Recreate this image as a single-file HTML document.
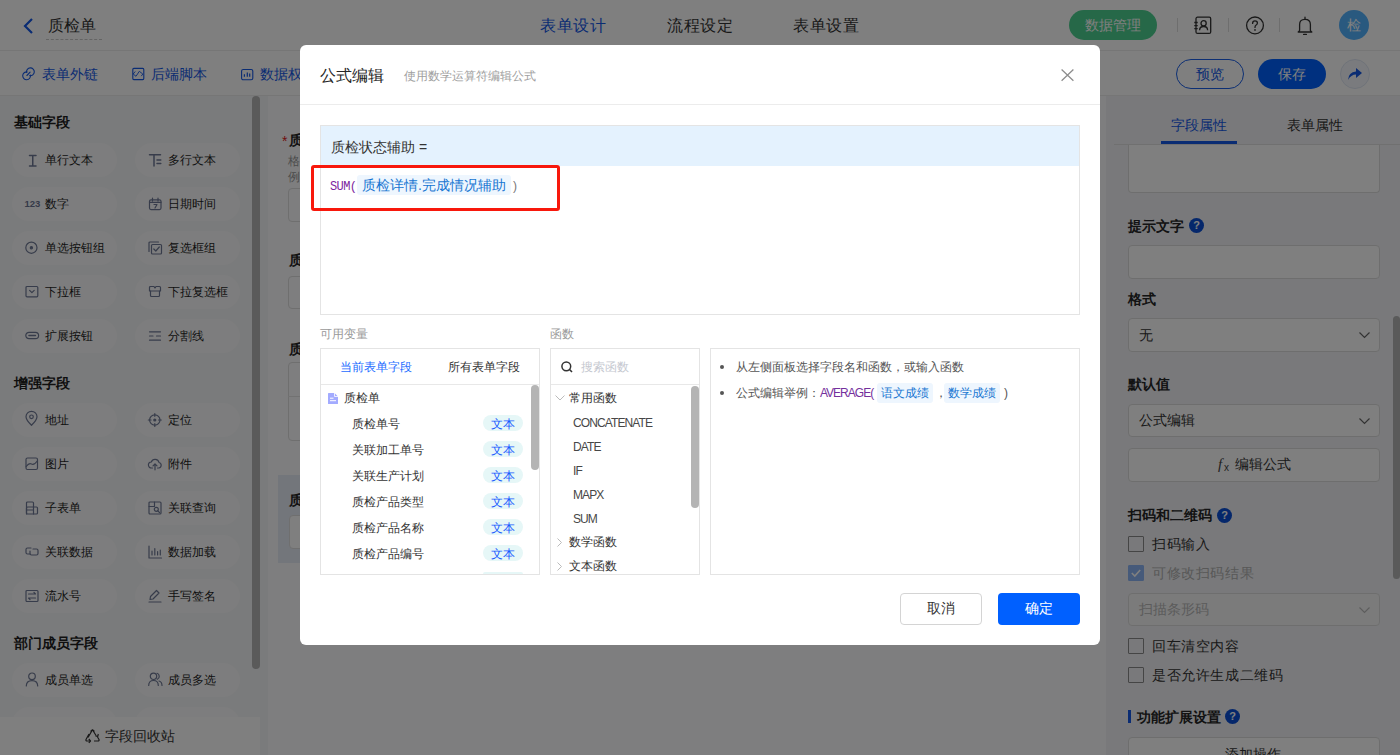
<!DOCTYPE html>
<html><head><meta charset="utf-8">
<style>
*{box-sizing:border-box;margin:0;padding:0}
html,body{width:1400px;height:755px;overflow:hidden;background:#fff;font-family:"Liberation Sans",sans-serif;color:#333}
.a{position:absolute}
.t{position:absolute;white-space:nowrap;line-height:1}
svg{position:absolute;overflow:visible}
/* left panel */
.pill{position:absolute;width:105px;height:34px;border-radius:17px;background:#fbfbfc}
.pill span{position:absolute;left:33px;top:11px;font-size:12px;line-height:12px;color:#1f1f1f;white-space:nowrap}

.sec{position:absolute;left:14px;font-size:14px;font-weight:bold;line-height:14px;color:#1f1f1f}
/* right panel */
.rl{position:absolute;left:1128px;font-size:14px;font-weight:bold;line-height:14px;color:#262626}
.rin{position:absolute;left:1128px;width:252px;border:1px solid #ddd;border-radius:4px;background:#fff}
.cb{position:absolute;left:1128px;width:16px;height:16px;border:1px solid #8a8a8a;border-radius:1px;background:transparent}
.cbt{position:absolute;left:1152px;font-size:14px;line-height:14px;color:#333;white-space:nowrap;letter-spacing:0.6px}
.q{position:absolute;width:15px;height:15px;border-radius:50%;background:#0a4fd6;color:#fff;font-size:11px;font-weight:bold;line-height:15px;text-align:center}
/* modal */
.mbox{position:absolute;border:1px solid #e4e4e4;background:#fff}
.vi{position:absolute;left:352px;font-size:12px;line-height:12px;color:#333;white-space:nowrap}
.tag{position:absolute;left:483px;width:40px;height:16px;margin-top:-1px;border-radius:8px;background:#e6f7f7;color:#1a5cff;font-size:12px;line-height:19px;text-align:center;overflow:hidden}
.fi{position:absolute;left:573px;margin-top:1px;font-size:12px;line-height:12px;color:#474747;white-space:nowrap;letter-spacing:-0.9px}
</style></head><body>

<!-- ===== HEADER ===== -->
<div class="a" style="left:0;top:0;width:1400px;height:51px;background:#fff;border-bottom:1px solid #ececec"></div>
<svg width="12" height="16" style="left:22px;top:18px"><path d="M10 1 L3 8 L10 15" fill="none" stroke="#1458e6" stroke-width="2.2"/></svg>
<div class="t" style="left:48px;top:18px;font-size:16px;color:#333">质检单</div>
<div class="a" style="left:46px;top:39px;width:56px;border-top:1px dashed #c8c8c8"></div>
<div class="t" style="left:540px;top:18px;font-size:16px;letter-spacing:0.5px;color:#1458e6">表单设计</div>
<div class="t" style="left:667px;top:18px;font-size:16px;letter-spacing:0.5px;color:#333">流程设定</div>
<div class="t" style="left:793px;top:18px;font-size:16px;letter-spacing:0.5px;color:#333">表单设置</div>
<div class="a" style="left:1069px;top:10px;width:88px;height:30px;border-radius:15px;background:#4cd090"></div>
<div class="t" style="left:1085px;top:18px;font-size:14px;color:#fff">数据管理</div>
<div class="a" style="left:1177px;top:18px;width:1px;height:14px;background:#ddd"></div>
<div class="a" style="left:1228px;top:18px;width:1px;height:14px;background:#ddd"></div>
<div class="a" style="left:1279px;top:18px;width:1px;height:14px;background:#ddd"></div>
<svg width="18" height="19" style="left:1194px;top:16px" fill="none" stroke="#333" stroke-width="1.3"><rect x="2" y="1.2" width="14.7" height="16.2" rx="1.5"/><path d="M0.3 6.5h3.4M0.3 9.7h3.4M0.3 12.7h3.4"/><circle cx="9.6" cy="7.2" r="2.6"/><path d="M5.6 14.2Q5.6 10.5 9.6 10.5Q13.6 10.5 13.6 14.2"/></svg>
<svg width="20" height="20" style="left:1245px;top:16px" fill="none" stroke="#333" stroke-width="1.3"><circle cx="10" cy="9.4" r="8.4"/><path d="M7.6 7.4Q7.6 4.9 10 4.9Q12.4 4.9 12.4 7.1Q12.4 8.5 10.9 9.3Q10 9.9 10 11.4" stroke-linecap="round"/><circle cx="10" cy="13.9" r="0.85" fill="#333" stroke="none"/></svg>
<svg width="16" height="19" style="left:1297px;top:16px" fill="none" stroke="#333" stroke-width="1.3" stroke-linejoin="round"><path d="M2.6 14.6V8.6Q2.6 3.3 8 3.3Q13.4 3.3 13.4 8.6V14.6L14.8 16H1.2Z"/><path d="M8 1.2v2M6.6 18.4h2.8" stroke-linecap="round"/></svg>
<div class="a" style="left:1339px;top:10px;width:30px;height:30px;border-radius:50%;background:#52b2ff"></div>
<div class="t" style="left:1347px;top:18px;font-size:14px;color:#fff">检</div>

<!-- ===== TOOLBAR ===== -->
<div class="a" style="left:0;top:51px;width:1400px;height:45px;background:#fff;border-bottom:1px solid #ececec"></div>
<svg width="14" height="14" style="left:22px;top:67px" fill="none" stroke="#1458e6" stroke-width="1.1" stroke-linecap="round"><path d="M4.56 5.48A3.9 3.9 0 1 1 7.72 8.64M8.44 8.12A3.9 3.9 0 1 1 5.28 4.96M4.9 8.5L8.1 5.1"/></svg>
<div class="t" style="left:42px;top:67px;font-size:14px;color:#1458e6">表单外链</div>
<svg width="13" height="14" style="left:132px;top:67px" fill="none" stroke="#1458e6" stroke-linejoin="round" stroke-linecap="round"><rect x="0.8" y="1.4" width="11" height="11.2" rx="1" stroke-width="1.1"/><path d="M3 4.8L1.2 7L4 9.3L7.3 4.3L10.8 7L9.5 8.8" stroke-width="0.9"/></svg>
<div class="t" style="left:151px;top:67px;font-size:14px;color:#1458e6">后端脚本</div>
<svg width="13" height="13" style="left:241px;top:68px" fill="none" stroke="#1458e6"><rect x="0.6" y="1.5" width="11.2" height="10.3" rx="1.6" stroke-width="1.1"/><path d="M3.4 6.2v2.6M6.3 4.6v4.2M8.7 5.6v3.2" stroke-width="1.2"/></svg>
<div class="t" style="left:260px;top:67px;font-size:14px;color:#1458e6">数据权限</div>
<div class="a" style="left:1176px;top:59px;width:68px;height:30px;border:1px solid #1a5fe8;border-radius:15px;background:#fff"></div>
<div class="t" style="left:1196px;top:67px;font-size:14px;color:#1458e6">预览</div>
<div class="a" style="left:1258px;top:59px;width:68px;height:30px;border-radius:15px;background:#0060ff"></div>
<div class="t" style="left:1278px;top:67px;font-size:14px;color:#fff">保存</div>
<div class="a" style="left:1340px;top:59px;width:30px;height:30px;border:1px solid #dfe6f3;border-radius:50%;background:#f4f7fc"></div>
<svg width="16" height="14" style="left:1347px;top:67px"><path d="M1 13 Q1.5 5 9 4.5 L9 1 L15 6 L9 11 L9 7.5 Q4 7.5 1 13 Z" fill="#1458e6"/></svg>

<!-- ===== LEFT PANEL ===== -->
<div class="a" style="left:0;top:96px;width:268px;height:659px;background:#f5f6f8"></div>
<div class="sec" style="top:115px">基础字段</div>
<div class="pill" style="left:12px;top:143px"><svg style="left:13px;top:10px" width="14" height="14" viewBox="0 0 14 14" fill="none" stroke="#6f7996" stroke-width="1.2" stroke-linecap="round" stroke-linejoin="round"><path d="M4.5 2.5h6.5M7.75 2.5v10.5M4.5 13h6.5" stroke-width="1.5"/></svg><span>单行文本</span></div>
<div class="pill" style="left:135px;top:143px"><svg style="left:13px;top:10px" width="14" height="14" viewBox="0 0 14 14" fill="none" stroke="#6f7996" stroke-width="1.2" stroke-linecap="round" stroke-linejoin="round"><path d="M1.5 1.8h11M6 1.8v11.2M9 7h3.8M9 10.5h3.8" stroke-width="1.5"/></svg><span>多行文本</span></div>
<div class="pill" style="left:12px;top:187px"><svg width="16" height="14" style="left:12px;top:9px"><text x="0.5" y="10.5" font-size="9.5" font-weight="bold" font-family="Liberation Sans" fill="#6b7593">123</text></svg><span>数字</span></div>
<div class="pill" style="left:135px;top:187px"><svg style="left:13px;top:10px" width="14" height="14" viewBox="0 0 14 14" fill="none" stroke="#6f7996" stroke-width="1.2" stroke-linecap="round" stroke-linejoin="round"><rect x="1.5" y="2.8" width="11.5" height="9.8" rx="1.5"/><path d="M4.5 1v3M10 1v3M1.5 5.3h11.5M6 7.5h3L7 11"/></svg><span>日期时间</span></div>
<div class="pill" style="left:12px;top:231px"><svg style="left:13px;top:10px" width="14" height="14" viewBox="0 0 14 14" fill="none" stroke="#6f7996" stroke-width="1.2" stroke-linecap="round" stroke-linejoin="round"><circle cx="6.4" cy="6.7" r="5.6"/><circle cx="6.4" cy="6.7" r="1.1" fill="#6b7593"/></svg><span>单选按钮组</span></div>
<div class="pill" style="left:135px;top:231px"><svg style="left:13px;top:10px" width="14" height="14" viewBox="0 0 14 14" fill="none" stroke="#6f7996" stroke-width="1.2" stroke-linecap="round" stroke-linejoin="round"><path d="M1 10.5V2Q1 1 2 1h8.5"/><rect x="3.5" y="3.5" width="10" height="9.5" rx="1"/><path d="M5.8 8L7.8 10L11.3 6"/></svg><span>复选框组</span></div>
<div class="pill" style="left:12px;top:275px"><svg style="left:13px;top:10px" width="14" height="14" viewBox="0 0 14 14" fill="none" stroke="#6f7996" stroke-width="1.2" stroke-linecap="round" stroke-linejoin="round"><rect x="1" y="1.5" width="11.8" height="10.3" rx="1"/><path d="M4.6 5.3L6.9 7.6L9.2 5.3"/></svg><span>下拉框</span></div>
<div class="pill" style="left:135px;top:275px"><svg style="left:13px;top:10px" width="14" height="14" viewBox="0 0 14 14" fill="none" stroke="#6f7996" stroke-width="1.2" stroke-linecap="round" stroke-linejoin="round"><path d="M1.5 6V2.5Q1.5 1.5 2.5 1.5h3.5L7 3L8 1.5h3.5Q12.5 1.5 12.5 2.5V6Z"/><path d="M2.5 6v4.5Q2.5 11.5 3.5 11.5h7Q11.5 11.5 11.5 10.5V6"/></svg><span>下拉复选框</span></div>
<div class="pill" style="left:12px;top:319px"><svg style="left:13px;top:10px" width="14" height="14" viewBox="0 0 14 14" fill="none" stroke="#6f7996" stroke-width="1.2" stroke-linecap="round" stroke-linejoin="round"><rect x="0.8" y="3.3" width="12.8" height="6.4" rx="3.2"/><path d="M4 6.5h6.4" stroke-width="1.6"/></svg><span>扩展按钮</span></div>
<div class="pill" style="left:135px;top:319px"><svg style="left:13px;top:10px" width="14" height="14" viewBox="0 0 14 14" fill="none" stroke="#6f7996" stroke-width="1.2" stroke-linecap="round" stroke-linejoin="round"><path d="M1.5 2.8h11M1.5 7h3.5M8.5 7h4M1.5 11.2h11"/></svg><span>分割线</span></div>
<div class="sec" style="top:376px">增强字段</div>
<div class="pill" style="left:12px;top:403px"><svg style="left:13px;top:8px" width="14" height="16" viewBox="0 0 14 16" fill="none" stroke="#6f7996" stroke-width="1.2" stroke-linecap="round" stroke-linejoin="round"><path d="M6.5 14.3C6.5 14.3 1 9 1 5.8A5.5 5.5 0 0 1 12 5.8C12 9 6.5 14.3 6.5 14.3Z"/><circle cx="6.5" cy="5.8" r="1.8"/></svg><span>地址</span></div>
<div class="pill" style="left:135px;top:403px"><svg style="left:13px;top:10px" width="14" height="14" viewBox="0 0 14 14" fill="none" stroke="#6f7996" stroke-width="1.2" stroke-linecap="round" stroke-linejoin="round"><circle cx="6.8" cy="7" r="5.2"/><path d="M6.8 0.5v2.8M6.8 10.7v2.8M0.3 7h2.8M10.5 7h2.8"/><circle cx="6.8" cy="7" r="1" fill="#6b7593"/></svg><span>定位</span></div>
<div class="pill" style="left:12px;top:447px"><svg style="left:13px;top:10px" width="14" height="14" viewBox="0 0 14 14" fill="none" stroke="#6f7996" stroke-width="1.2" stroke-linecap="round" stroke-linejoin="round"><rect x="1" y="1" width="11.5" height="11.5" rx="1.5"/><path d="M1.2 9.5Q4 5.5 6.5 7Q9 8.5 12.3 4"/></svg><span>图片</span></div>
<div class="pill" style="left:135px;top:447px"><svg style="left:13px;top:10px" width="14" height="14" viewBox="0 0 14 14" fill="none" stroke="#6f7996" stroke-width="1.2" stroke-linecap="round" stroke-linejoin="round"><path d="M4.5 11H3.5A3 3 0 0 1 3.3 5A4 4 0 0 1 11 5.5A2.8 2.8 0 0 1 10.8 11H9.5"/><path d="M7 12.8V7M5 8.8L7 6.8L9 8.8"/></svg><span>附件</span></div>
<div class="pill" style="left:12px;top:491px"><svg style="left:13px;top:10px" width="14" height="14" viewBox="0 0 14 14" fill="none" stroke="#6f7996" stroke-width="1.2" stroke-linecap="round" stroke-linejoin="round"><path d="M1.5 13V2Q1.5 1 2.5 1h5Q8.5 1 8.5 2V6"/><rect x="1.5" y="6" width="11" height="7" rx="1"/><path d="M1.5 9h7M8.5 6v7"/></svg><span>子表单</span></div>
<div class="pill" style="left:135px;top:491px"><svg style="left:13px;top:10px" width="14" height="14" viewBox="0 0 14 14" fill="none" stroke="#6f7996" stroke-width="1.2" stroke-linecap="round" stroke-linejoin="round"><rect x="1" y="1" width="12" height="12" rx="1"/><path d="M1 5.5h5.5V1"/><circle cx="8.3" cy="8.3" r="2"/><path d="M9.8 9.8L11.5 11.5"/></svg><span>关联查询</span></div>
<div class="pill" style="left:12px;top:535px"><svg style="left:13px;top:10px" width="14" height="14" viewBox="0 0 14 14" fill="none" stroke="#6f7996" stroke-width="1.2" stroke-linecap="round" stroke-linejoin="round"><path d="M6 3H2.5Q1 3 1 4.5v3Q1 9 2.5 9H5"/><path d="M8 4H11.5Q13 4 13 5.5v3Q13 10 11.5 10H6.5Q5 10 5 8.5V6"/></svg><span>关联数据</span></div>
<div class="pill" style="left:135px;top:535px"><svg style="left:13px;top:10px" width="14" height="14" viewBox="0 0 14 14" fill="none" stroke="#6f7996" stroke-width="1.2" stroke-linecap="round" stroke-linejoin="round"><path d="M1 1v12h12.5M4 10V6M6.8 10V3.5M9.6 10V6.5M12.3 10V5"/></svg><span>数据加载</span></div>
<div class="pill" style="left:12px;top:579px"><svg style="left:13px;top:10px" width="14" height="14" viewBox="0 0 14 14" fill="none" stroke="#6f7996" stroke-width="1.2" stroke-linecap="round" stroke-linejoin="round"><rect x="1" y="1.5" width="12" height="11" rx="1"/><path d="M3.5 5h7L9 3.5M10.5 9h-7L5 10.5"/></svg><span>流水号</span></div>
<div class="pill" style="left:135px;top:579px"><svg style="left:13px;top:10px" width="14" height="14" viewBox="0 0 14 14" fill="none" stroke="#6f7996" stroke-width="1.2" stroke-linecap="round" stroke-linejoin="round"><path d="M2 10.5L2.5 7.5L8.5 1.5L11 4L5 10Z"/><path d="M1 13h12"/></svg><span>手写签名</span></div>
<div class="sec" style="top:636px">部门成员字段</div>
<div class="pill" style="left:12px;top:663px"><svg style="left:13px;top:9px" width="14" height="15" viewBox="0 0 14 15" fill="none" stroke="#6f7996" stroke-width="1.2" stroke-linecap="round" stroke-linejoin="round"><circle cx="7" cy="4.3" r="3.3"/><path d="M1.3 14Q1.3 8.6 7 8.6Q12.7 8.6 12.7 14"/></svg><span>成员单选</span></div>
<div class="pill" style="left:135px;top:663px"><svg style="left:13px;top:9px" width="15" height="15" viewBox="0 0 15 15" fill="none" stroke="#6f7996" stroke-width="1.2" stroke-linecap="round" stroke-linejoin="round"><circle cx="5.5" cy="4.3" r="3.2"/><path d="M0.7 13.5Q0.7 8.5 5.5 8.5Q10.3 8.5 10.3 13.5"/><path d="M9 1.3A3.2 3.2 0 0 1 9.3 7.3M11 9Q14 9.8 14 13.5"/></svg><span>成员多选</span></div>
<div class="pill" style="left:12px;top:707px"></div>
<div class="pill" style="left:135px;top:707px"></div>
<div class="a" style="left:252px;top:96px;width:8px;height:573px;border-radius:4px;background:#b4b4b4"></div>
<div class="a" style="left:0;top:717px;width:260px;height:38px;background:#fff"></div>
<svg width="15" height="14" style="left:85px;top:729px" fill="none" stroke="#333" stroke-width="1.2" stroke-linejoin="round"><path d="M5.5 2.5L7.5 0.8L9.5 2.5M4 5L1 10.5Q0.6 12 2 12H5M9 12h4Q14.4 12 14 10.5L12.5 8M7.5 0.8L3 8.5M7.5 0.8L11 6.5"/><path d="M3.8 10L5.5 12L3.8 13.8M10.5 6.8L12.8 7.3L13.3 5"/></svg>
<div class="t" style="left:105px;top:729px;font-size:14px;color:#333">字段回收站</div>

<!-- ===== CANVAS ===== -->
<div class="a" style="left:268px;top:96px;width:838px;height:659px;background:#fdfdfe"></div>


<!-- canvas form -->
<div class="t" style="left:282px;top:134px;font-size:14px;color:#e02020">*</div>
<div class="t" style="left:289px;top:133px;font-size:14px;font-weight:bold;color:#262626">质检状态</div>
<div class="t" style="left:288px;top:155px;font-size:12px;color:#999">格式说明</div>
<div class="t" style="left:288px;top:171px;font-size:12px;color:#999">例如说明</div>
<div class="a" style="left:288px;top:188px;width:200px;height:34px;border:1px solid #dedede;border-radius:4px"></div>
<div class="t" style="left:289px;top:253px;font-size:14px;font-weight:bold;color:#262626">质检单号</div>
<div class="a" style="left:288px;top:276px;width:200px;height:33px;border:1px solid #dedede;border-radius:4px"></div>
<div class="t" style="left:289px;top:342px;font-size:14px;font-weight:bold;color:#262626">质检详情</div>
<div class="a" style="left:288px;top:362px;width:200px;height:79px;border:1px solid #dedede;border-radius:4px"></div>
<div class="a" style="left:288px;top:396px;width:200px;height:1px;background:#e4e4e4"></div>
<div class="a" style="left:278px;top:475px;width:400px;height:88px;background:#e6ecf7"></div>
<div class="t" style="left:289px;top:493px;font-size:14px;font-weight:bold;color:#262626">质检状态辅助</div>
<div class="a" style="left:289px;top:515px;width:200px;height:34px;border:1px solid #dedede;border-radius:4px;background:#fff"></div>

<!-- ===== RIGHT PANEL ===== -->
<div class="a" style="left:1106px;top:96px;width:294px;height:659px;background:#f2f3f6"></div>


<!-- right panel content -->
<div class="t" style="left:1171px;top:118px;font-size:14px;color:#1458e6">字段属性</div>
<div class="t" style="left:1287px;top:118px;font-size:14px;color:#333">表单属性</div>
<div class="a" style="left:1114px;top:144px;width:286px;height:1px;background:#e0e0e0"></div>
<div class="a" style="left:1161px;top:141px;width:76px;height:3px;background:#1458e6"></div>
<div class="rin" style="top:145px;height:48px;border-top:none;border-radius:0 0 4px 4px"></div>
<div class="rl" style="top:219px">提示文字</div>
<div class="q" style="left:1189px;top:218px">?</div>
<div class="rin" style="top:245px;height:34px"></div>
<div class="rl" style="top:292px">格式</div>
<div class="rin" style="top:318px;height:34px"></div>
<div class="t" style="left:1139px;top:328px;font-size:14px;color:#333">无</div>
<svg width="11" height="6" style="left:1359px;top:332px"><path d="M0.5 0.5 L5.5 5.5 L10.5 0.5" fill="none" stroke="#666" stroke-width="1.2"/></svg>
<div class="rl" style="top:377px">默认值</div>
<div class="rin" style="top:404px;height:33px"></div>
<div class="t" style="left:1139px;top:413px;font-size:14px;color:#333">公式编辑</div>
<svg width="11" height="6" style="left:1359px;top:418px"><path d="M0.5 0.5 L5.5 5.5 L10.5 0.5" fill="none" stroke="#666" stroke-width="1.2"/></svg>
<div class="rin" style="top:448px;height:34px"></div>
<div class="t" style="left:1218px;top:457px;font-size:15px;font-style:italic;font-family:'Liberation Serif',serif;color:#444">f</div><div class="t" style="left:1224px;top:463px;font-size:10px;font-family:'Liberation Sans',sans-serif;color:#444">x</div>
<div class="t" style="left:1235px;top:457px;font-size:14px;color:#333">编辑公式</div>
<div class="rl" style="top:508px">扫码和二维码</div>
<div class="q" style="left:1217px;top:508px">?</div>
<div class="cb" style="top:536px"></div>
<div class="cbt" style="top:537px">扫码输入</div>
<div class="cb" style="top:565px;background:#8cb4f5;border-color:#8cb4f5"></div>
<svg width="10" height="8" style="left:1131px;top:569px"><path d="M0.8 4 L3.8 7 L9.2 1" fill="none" stroke="#fff" stroke-width="1.6"/></svg>
<div class="cbt" style="top:566px;color:#b0b0b0">可修改扫码结果</div>
<div class="rin" style="top:593px;height:33px;background:#f7f7f7"></div>
<div class="t" style="left:1139px;top:602px;font-size:14px;color:#b8b8b8">扫描条形码</div>
<svg width="11" height="6" style="left:1359px;top:607px"><path d="M0.5 0.5 L5.5 5.5 L10.5 0.5" fill="none" stroke="#bbb" stroke-width="1.2"/></svg>
<div class="cb" style="top:638px"></div>
<div class="cbt" style="top:639px">回车清空内容</div>
<div class="cb" style="top:667px"></div>
<div class="cbt" style="top:668px">是否允许生成二维码</div>
<div class="a" style="left:1128px;top:710px;width:3px;height:13px;background:#1458e6"></div>
<div class="rl" style="left:1137px;top:710px">功能扩展设置</div>
<div class="q" style="left:1225px;top:709px">?</div>
<div class="rin" style="top:737px;height:34px"></div>
<div class="t" style="left:1225px;top:747px;font-size:14px;color:#333">添加操作</div>
<div class="a" style="left:1393px;top:316px;width:7px;height:263px;border-radius:4px;background:#b4b4b4"></div>

<!-- ===== OVERLAY ===== -->
<div class="a" style="left:0;top:0;width:1400px;height:755px;background:rgba(0,0,0,.5)"></div>

<!-- ===== MODAL ===== -->
<div class="a" style="left:300px;top:45px;width:800px;height:600px;border-radius:6px;background:#fff"></div>


<div class="t" style="left:320px;top:68px;font-size:16px;color:#262626">公式编辑</div>
<div class="t" style="left:404px;top:70px;font-size:12px;color:#a0a0a0">使用数学运算符编辑公式</div>
<svg width="13" height="12" style="left:1061px;top:69px"><path d="M0.6 0.5 L12.4 11.8 M12.4 0.5 L0.6 11.8" stroke="#8c8c8c" stroke-width="1.25"/></svg>
<div class="a" style="left:300px;top:104px;width:800px;height:1px;background:#ececec"></div>
<!-- editor -->
<div class="mbox" style="left:320px;top:125px;width:760px;height:190px"></div>
<div class="a" style="left:321px;top:126px;width:758px;height:40px;background:#e4f2fe"></div>
<div class="t" style="left:331px;top:140px;font-size:14px;color:#333">质检状态辅助 =</div>
<div class="t" style="left:330px;top:181px;font-size:12px;font-family:'Liberation Mono',monospace;color:#7d1fa0;letter-spacing:-0.6px">SUM(</div>
<div class="a" style="left:357px;top:175px;width:154px;height:20px;border-radius:3px;background:#eef6fe"></div>
<div class="t" style="left:362px;top:178px;font-size:14px;color:#1976d2">质检详情.完成情况辅助</div>
<div class="t" style="left:513px;top:180px;font-size:12px;color:#777">)</div>
<div class="a" style="left:311px;top:165px;width:249px;height:46px;border:3px solid #f8180c;border-radius:3px"></div>
<!-- labels -->
<div class="t" style="left:320px;top:328px;font-size:12px;color:#999">可用变量</div>
<div class="t" style="left:550px;top:328px;font-size:12px;color:#999">函数</div>
<!-- variables -->
<div class="mbox" style="left:320px;top:348px;width:220px;height:227px"></div>
<div class="a" style="left:321px;top:384px;width:218px;height:1px;background:#e8e8e8"></div>
<div class="t" style="left:340px;top:361px;font-size:12px;color:#1d6cff">当前表单字段</div>
<div class="t" style="left:448px;top:361px;font-size:12px;color:#333">所有表单字段</div>
<svg width="10" height="11" style="left:328px;top:393px"><path d="M0 0.5 Q0 0 0.5 0 L6.5 0 L10 3.5 L10 10.5 Q10 11 9.5 11 L0.5 11 Q0 11 0 10.5 Z" fill="#a3abff"/><path d="M6.5 0 V3.5 H10" fill="none" stroke="#fff" stroke-width="0.8"/><path d="M2 5.2h3.5M2 7.7h6" stroke="#fff" stroke-width="1"/></svg>
<div class="t" style="left:344px;top:392px;font-size:12px;color:#333">质检单</div>
<div class="vi" style="top:418px">质检单号</div><div class="tag" style="top:416px">文本</div>
<div class="vi" style="top:444px">关联加工单号</div><div class="tag" style="top:442px">文本</div>
<div class="vi" style="top:470px">关联生产计划</div><div class="tag" style="top:468px">文本</div>
<div class="vi" style="top:496px">质检产品类型</div><div class="tag" style="top:494px">文本</div>
<div class="vi" style="top:522px">质检产品名称</div><div class="tag" style="top:520px">文本</div>
<div class="vi" style="top:548px">质检产品编号</div><div class="tag" style="top:546px">文本</div>
<div class="a" style="left:483px;top:572px;width:40px;height:2px;border-radius:8px 8px 0 0;background:#e6f7f7"></div>
<div class="a" style="left:531px;top:385px;width:8px;height:85px;border-radius:4px;background:#b4b4b4"></div>

<!-- functions -->
<div class="mbox" style="left:550px;top:348px;width:150px;height:227px"></div>
<div class="a" style="left:551px;top:384px;width:148px;height:1px;background:#e8e8e8"></div>
<svg width="12" height="12" style="left:561px;top:361px"><circle cx="5.3" cy="5.3" r="4.4" fill="none" stroke="#333" stroke-width="1.5"/><path d="M8.5 8.5 L11 11" stroke="#333" stroke-width="1.6"/></svg>
<div class="t" style="left:581px;top:361px;font-size:12px;color:#c5c8d0">搜索函数</div>
<svg width="10" height="6" style="left:555px;top:395px"><path d="M0.5 0.5 L5 5 L9.5 0.5" fill="none" stroke="#bbb" stroke-width="1"/></svg>
<div class="t" style="left:569px;top:392px;font-size:12px;color:#333">常用函数</div>
<div class="fi" style="top:416px">CONCATENATE</div>
<div class="fi" style="top:440px">DATE</div>
<div class="fi" style="top:464px">IF</div>
<div class="fi" style="top:488px">MAPX</div>
<div class="fi" style="top:512px">SUM</div>

<svg width="5" height="9" style="left:557px;top:538px"><path d="M0.5 0.5 L4.5 4.5 L0.5 8.5" fill="none" stroke="#bbb" stroke-width="1"/></svg>
<div class="t" style="left:569px;top:536px;font-size:12px;color:#333">数学函数</div>
<svg width="5" height="9" style="left:557px;top:562px"><path d="M0.5 0.5 L4.5 4.5 L0.5 8.5" fill="none" stroke="#bbb" stroke-width="1"/></svg>
<div class="a" style="left:551px;top:555px;width:148px;height:19px;overflow:hidden"><div class="t" style="left:18px;top:5px;font-size:12px;color:#333">文本函数</div></div>
<div class="a" style="left:691px;top:386px;width:8px;height:122px;border-radius:4px;background:#b4b4b4"></div>
<!-- help -->
<div class="mbox" style="left:710px;top:348px;width:370px;height:227px"></div>
<div class="a" style="left:720px;top:365px;width:4px;height:4px;border-radius:50%;background:#555"></div>
<div class="t" style="left:736px;top:361px;font-size:12px;color:#555">从左侧面板选择字段名和函数，或输入函数</div>
<div class="a" style="left:720px;top:391px;width:4px;height:4px;border-radius:50%;background:#555"></div>
<div class="t" style="left:736px;top:387px;font-size:12px;color:#555">公式编辑举例：</div>
<div class="t" style="left:820px;top:387px;font-size:12px;color:#74309c;letter-spacing:-1px">AVERAGE(</div>
<div class="a" style="left:877px;top:383px;width:56px;height:20px;border-radius:3px;background:#eef6fe"></div>
<div class="t" style="left:881px;top:387px;font-size:12px;color:#1976d2">语文成绩</div>
<div class="t" style="left:935px;top:387px;font-size:12px;color:#555">，</div>
<div class="a" style="left:944px;top:383px;width:56px;height:20px;border-radius:3px;background:#eef6fe"></div>
<div class="t" style="left:948px;top:387px;font-size:12px;color:#1976d2">数学成绩</div>
<div class="t" style="left:1004px;top:387px;font-size:12px;color:#555">)</div>
<!-- footer -->
<div class="a" style="left:900px;top:593px;width:82px;height:32px;border:1px solid #d4d4d4;border-radius:4px;background:#fff"></div>
<div class="t" style="left:927px;top:601px;font-size:14px;color:#333">取消</div>
<div class="a" style="left:998px;top:593px;width:82px;height:32px;border-radius:4px;background:#0060ff"></div>
<div class="t" style="left:1025px;top:601px;font-size:14px;color:#fff">确定</div>

</body></html>
